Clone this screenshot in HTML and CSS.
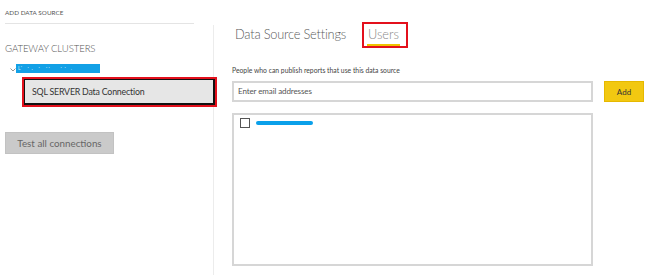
FILE: index.html
```html
<!DOCTYPE html>
<html>
<head>
<meta charset="utf-8">
<link rel="stylesheet" href="styles.css">
</head>
<body>
<div class="page">
  <aside class="side">
    <div class="side-head">ADD DATA SOURCE</div>
    <div class="side-body">
      <div class="clusters-title">GATEWAY CLUSTERS</div>
      <div class="tree-row">
        <svg class="chev" width="6" height="4" viewBox="0 0 6 4"><path d="M0.5 0.5 L3 3 L5.5 0.5" fill="none" stroke="#888" stroke-width="0.9"/></svg>
        <span class="cluster-name"><span class="dots">L⁺ &nbsp;&nbsp; ⠂⠄ &nbsp;⠂ &nbsp;⠐⠂ &nbsp;&nbsp;&nbsp;&nbsp;&nbsp;⠂⠂ &nbsp;.</span></span>
      </div>
      <div class="ds-item"><div class="ds-inner">SQL SERVER Data Connection</div></div>
      <button class="test-btn">Test all connections</button>
    </div>
  </aside>
  <main class="main">
    <div class="tabs">
      <span class="tab">Data Source Settings</span>
      <span class="tab tab-active"><span class="tab-label">Users</span></span>
    </div>
    <div class="desc">People who can publish reports that use this data source</div>
    <div class="add-row">
      <div class="email-input">Enter email addresses</div>
      <button class="add-btn">Add</button>
    </div>
    <div class="user-list">
      <div class="user-row">
        <span class="checkbox"></span>
        <span class="user-name"></span>
      </div>
    </div>
  </main>
</div>
</body>
</html>
```

FILE: styles.css
```css
* { box-sizing: border-box; }
html, body { margin: 0; padding: 0; background: #fff; }
body { font-family: Lato, "Noto Sans", sans-serif; color: #444; width: 650px; height: 275px; overflow: hidden; }
.page { display: flex; height: 275px; }

.side { width: 214px; display: flex; flex-direction: column; flex: none; }
.side-head { margin-left: 5px; width: 189px; height: 24px; padding-top: 9px; font-size: 6.3px; color: #555; border-bottom: 1px solid #e4e4e4; letter-spacing: 0.05px; }
.side-body { flex: 1; border-right: 1px solid #ececec; margin-top: 1px; position: relative; }
.clusters-title { margin: 17px 0 0 5px; font-size: 9.6px; color: #555; height: 13px; line-height: 13px; letter-spacing: -0.1px; font-weight: 300; }
.tree-row { display: flex; align-items: center; margin-top: 9px; height: 9px; }
.chev { margin-left: 10px; margin-top: 3px; }
.cluster-name { display: block; margin-left: 0px; width: 84px; height: 9px; background: #12a0e6; overflow: hidden; }
.dots { display: block; font-size: 5px; line-height: 9px; color: #cfe9f8; white-space: nowrap; padding-left: 2px; }
.ds-item { margin: 4px 0 0 22px; width: 195px; height: 30px; border: 2px solid #e3101c; background: #111; padding: 1px 2px 2px 1px; }
.ds-inner { height: 100%; background: #e6e6e6; font-size: 8.8px; color: #333; padding-left: 7px; line-height: 23px; letter-spacing: -0.2px; }
.test-btn { display: block; margin: 25px 0 0 5px; width: 109px; height: 22px; border: 1px solid #c2c2c2; background: #cacaca; color: #666; font-family: inherit; font-size: 9.8px; padding: 0; }

.main { flex: 1; padding-left: 18px; }
.tabs { display: flex; align-items: flex-start; margin-top: 22px; height: 26px; }
.tab { font-size: 12.8px; color: #5a5a5a; margin-left: 3px; line-height: 24px; letter-spacing: -0.2px; font-weight: 300; }
.tab-active { margin-left: 16px; width: 46px; height: 26px; border: 2px solid #e3101c; position: relative; padding-left: 3px; line-height: 20px; color: #888; letter-spacing: 0; }
.tab-label { display: inline-block; border-bottom: 2px solid #efc300; line-height: 20px; padding: 0 1px; height: 22px; }
.desc { margin-top: 17px; font-size: 6.8px; color: #444; height: 10px; line-height: 10px; }
.add-row { display: flex; align-items: flex-start; margin-top: 6px; }
.email-input { width: 361px; height: 21px; border: 2px solid #d6d6d6; font-size: 8px; color: #555; padding-left: 4px; line-height: 17px; letter-spacing: -0.1px; }
.add-btn { margin-left: 11px; width: 40px; height: 21px; background: #f2c811; border: 1px solid #e6b800; font-family: inherit; font-size: 8px; color: #333; padding: 0; }
.user-list { margin-top: 11px; width: 361px; height: 153px; border: 2px solid #d6d6d6; padding: 3px 0 0 6px; }
.user-row { display: flex; align-items: center; }
.checkbox { width: 10px; height: 10px; border: 1.5px solid #555; display: block; }
.user-name { display: block; margin-left: 6px; width: 57px; height: 4px; background: #0aa0ea; border-radius: 2px; margin-top: -1px; }
```
